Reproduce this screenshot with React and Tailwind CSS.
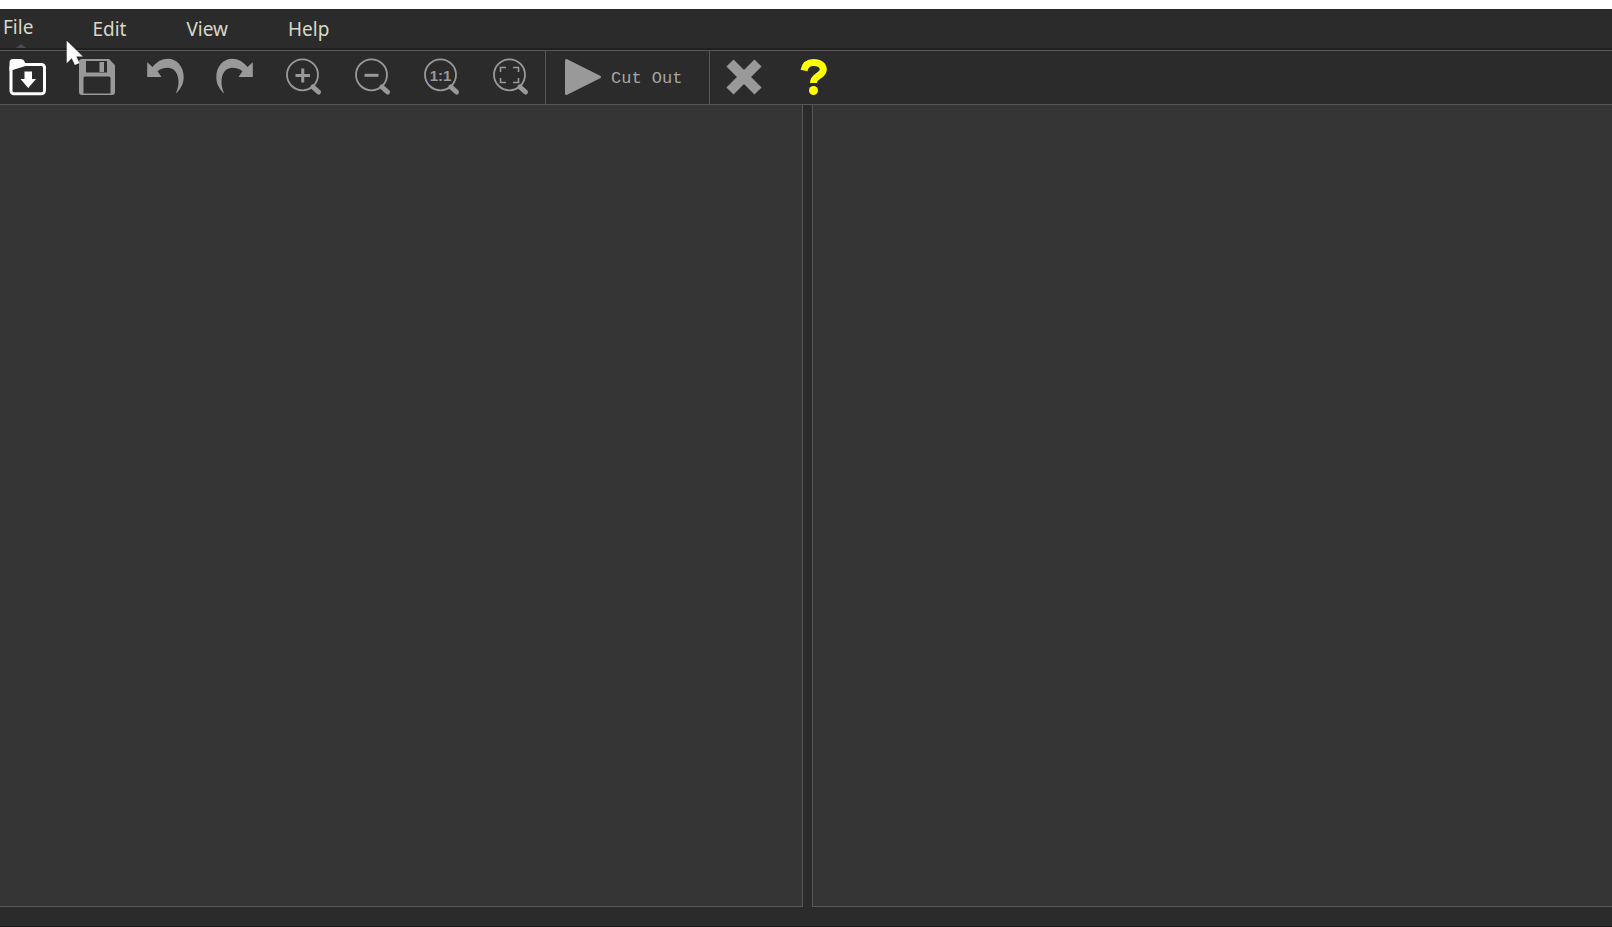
const menus = ["Edit", "View", "Help"];

const Icon = ({ children, className = "" }) => (
    <svg viewBox="0 0 36 36" className={`size-9 shrink-0 overflow-visible ${className}`} aria-hidden="true">
        {children}
    </svg>
);

const OpenIcon = () => (
    <Icon className="text-white">
        <path d="M-.5 12V3.500q0-3.500 3.500-3.500h8q2.500 0 3.500 2.500L15.500 5v2z" fill="currentColor" />
        <rect x="1" y="5.500" width="33.500" height="29.200" rx="3" fill="none" stroke="currentColor" strokeWidth="3" />
        <path d="M14.500 12.500h7.500v7.500h4L18.250 29 10.500 20h4z" fill="currentColor" />
    </Icon>
);

const SaveIcon = () => (
    <Icon>
        <path
            fill="currentColor"
            fillRule="evenodd"
            d="M3 0h27l6 6v27q0 3-3 3H3q-3 0-3-3V3q0-3 3-3zM7 2V13.500h21V2zM4.500 19v15.500h27V19q0-1.500-1.500-1.500H6q-1.500 0-1.500 1.500z"
        />
        <rect x="20.500" y="3" width="4.500" height="10" fill="currentColor" />
    </Icon>
);

const arrowPath =
    "M-.8 3.300L4.500 8C9 2.500 14-.3 19.800-.3 29 -.3 35.700 7.500 35.700 18c0 6.500-2.800 12-8 16.700 2-4.500 2.800-8 2.800-11.700C30.500 14 26 8.800 19.500 8.800c-4 0-7.500 1.200-10 3.400l4 5.800H-.8z";

const UndoIcon = () => (
    <Icon>
        <path fill="currentColor" d={arrowPath} />
    </Icon>
);

const RedoIcon = () => (
    <Icon>
        <g transform="matrix(-1 0 0 1 35 0)">
            <path fill="currentColor" d={arrowPath} />
        </g>
    </Icon>
);

const Magnifier = ({ children }) => (
    <Icon>
        <circle cx="16.500" cy="15.800" r="15.500" fill="none" stroke="currentColor" strokeWidth="1.800" />
        <path d="M27 28l5.500 5" stroke="currentColor" strokeWidth="5" strokeLinecap="round" />
        {children}
    </Icon>
);

const ZoomInIcon = () => (
    <Magnifier>
        <path d="M9.500 16.500h14.500M16.750 9.500v14" stroke="currentColor" strokeWidth="3" />
    </Magnifier>
);

const ZoomOutIcon = () => (
    <Magnifier>
        <path d="M9.500 16.300h14" stroke="currentColor" strokeWidth="3" />
    </Magnifier>
);

const ActualSizeIcon = () => (
    <Magnifier>
        <text x="16.500" y="22" textAnchor="middle" fill="currentColor" className="font-['Liberation_Sans',sans-serif] text-[15px] font-bold">
            1:1
        </text>
    </Magnifier>
);

const FitIcon = () => (
    <Magnifier>
        <path d="M7.500 13V8.500H13M20 8.500h5.500V13M25.500 19v4.500H20M13 23.500H7.500V19" fill="none" stroke="currentColor" strokeWidth="1.600" />
    </Magnifier>
);

const PlayIcon = () => (
    <Icon>
        <path d="M1.500 1.500L34.500 18 1.500 34.500z" fill="currentColor" stroke="currentColor" strokeWidth="3" strokeLinejoin="round" />
    </Icon>
);

const CloseIcon = () => (
    <Icon>
        <path d="M4 4l28 28M32 4L4 32" stroke="currentColor" strokeWidth="10" />
    </Icon>
);

const HelpIcon = () => (
    <Icon className="text-[#ffff00]">
        <path
            d="M9 11.500C10 6 13.500 3.500 18.500 3.500c6.300 0 9.800 3 9.800 7 0 6.500-9.800 6-9.800 13.500"
            fill="none"
            stroke="currentColor"
            strokeWidth="7"
        />
        <circle cx="18.500" cy="31.500" r="4.500" fill="currentColor" />
    </Icon>
);

const tools = [
    { label: "Open", icon: OpenIcon },
    { label: "Save", icon: SaveIcon },
    { label: "Undo", icon: UndoIcon },
    { label: "Redo", icon: RedoIcon },
    { label: "Zoom in", icon: ZoomInIcon },
    { label: "Zoom out", icon: ZoomOutIcon },
    { label: "Actual size", icon: ActualSizeIcon },
    { label: "Fit to window", icon: FitIcon },
];

const MenuBar = () => (
    <nav className="relative flex h-[41px] items-start border-b-2 border-[#202020] pl-[3px] text-[19px] leading-6 text-[#d8d8c8]">
        <button type="button" className="mt-1.5 mr-[59px]">File</button>
        <div className="mt-2 flex gap-[60px]">
            {menus.map((name) => (
                <button type="button" key={name}>{name}</button>
            ))}
        </div>
        <svg viewBox="0 0 10 4" className="absolute bottom-0 left-4 h-1 w-2.5" aria-hidden="true">
            <path d="M0 4l5-4 5 4z" fill="#4c4c4c" />
        </svg>
    </nav>
);

const ToolBar = () => (
    <div className="flex items-stretch border-y border-[#575757] text-[#999999]">
        <div className="flex gap-[33px] pt-2 pr-4 pb-[9px] pl-2.5">
            {tools.map(({ label, icon: ToolIcon }) => (
                <button type="button" key={label} aria-label={label}>
                    <ToolIcon />
                </button>
            ))}
        </div>
        <button
            type="button"
            className="flex items-start gap-2.5 border-x border-[#575757] pt-2 pr-[27px] pl-[19px] font-['Liberation_Mono',monospace] text-[17px] leading-10"
        >
            <PlayIcon />
            <span className="text-[#a6a6a0]">Cut Out</span>
        </button>
        <div className="flex gap-[33px] pt-2 pb-[9px] pl-4">
            <button type="button" aria-label="Close"><CloseIcon /></button>
            <button type="button" aria-label="Help"><HelpIcon /></button>
        </div>
    </div>
);

const Cursor = () => (
    <svg viewBox="0 0 17 25" className="pointer-events-none absolute top-10 left-[66px] h-[25px] w-[17px]" aria-hidden="true">
        <path d="M.7.700v22.500l5-5 3.200 6.800 4.600-2-3.200-6.500H16.800z" fill="#fff" />
    </svg>
);

const App = () => {
    return (
        <div className="relative flex min-h-screen flex-col bg-[#2b2b2b] font-['Noto_Sans',sans-serif]">
            <div className="h-[9px] bg-white" />
            <MenuBar />
            <ToolBar />
            <main className="flex flex-1 gap-[9px]">
                <section aria-label="Source" className="w-[49.8%] border-r border-b border-[#575757] bg-[#353535]" />
                <section aria-label="Result" className="flex-1 border-b border-l border-[#575757] bg-[#353535]" />
            </main>
            <footer className="h-5 border-b border-[#181818]" />
            <Cursor />
        </div>
    );
};

export default App;
